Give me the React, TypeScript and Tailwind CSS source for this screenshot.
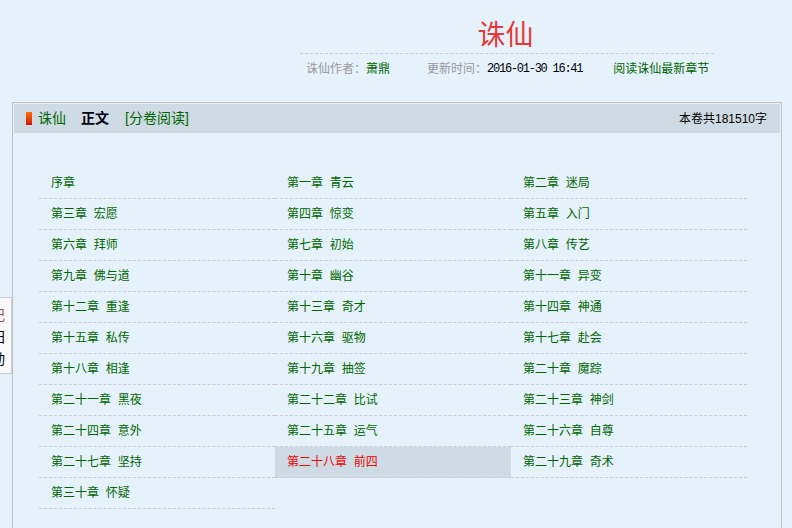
import React from 'react';

const chapters: string[] = [
  '序章', '第一章 青云', '第二章 迷局',
  '第三章 宏愿', '第四章 惊变', '第五章 入门',
  '第六章 拜师', '第七章 初始', '第八章 传艺',
  '第九章 佛与道', '第十章 幽谷', '第十一章 异变',
  '第十二章 重逢', '第十三章 奇才', '第十四章 神通',
  '第十五章 私传', '第十六章 驱物', '第十七章 赴会',
  '第十八章 相逢', '第十九章 抽签', '第二十章 魔踪',
  '第二十一章 黑夜', '第二十二章 比试', '第二十三章 神剑',
  '第二十四章 意外', '第二十五章 运气', '第二十六章 自尊',
  '第二十七章 坚持', '第二十八章 前四', '第二十九章 奇术',
  '第三十章 怀疑',
];

const current = '第二十八章 前四';

const font = { fontFamily: '"Liberation Sans", "Noto Sans CJK SC", sans-serif' };

const App: React.FC = () => {
  return (
    <div className="relative min-h-[528px] bg-[#e6f2fb] overflow-hidden text-[12px]" style={font}>
      {/* book title + info */}
      <div className="ml-[300px] w-[414px] pt-[19px]">
        <h1 className="text-center text-[28px] leading-[33px] text-[#e43a3a] font-normal pr-[3px]">诛仙</h1>
        <div className="border-t border-dashed border-[#cccccc] mt-px h-[30px] flex items-center pl-[6px] whitespace-nowrap">
          <span className="shrink-0 text-[#999999]">诛仙作者：</span>
          <span className="shrink-0 text-[#006600]">萧鼎</span>
          <span className="shrink-0 text-[#999999] ml-[37px]">更新时间：</span>
          <span className="shrink-0 text-black tracking-[-1.25px]" style={{ fontFamily: '"Liberation Mono", monospace' }}>2016-01-30 16:41</span>
          <span className="shrink-0 text-[#006600] ml-[31px]">阅读诛仙最新章节</span>
        </div>
      </div>

      {/* chapter list box */}
      <div className="mt-[19px] ml-[12px] w-[770px] border border-[#c0c0c0] p-px pb-[30px] min-h-[440px]">
        <div className="h-[29px] bg-[#cfdbe4] flex items-center pl-[12px] pr-[13px] text-[14px]">
          <span className="w-[6px] h-[13px] bg-gradient-to-b from-[#ff6a00] to-[#cc1100] mr-[6px]" />
          <span className="text-[#006600]">诛仙</span>
          <span className="ml-[15px] font-bold text-[#000011]">正文</span>
          <span className="ml-[16px] text-[#006600]">[分卷阅读]</span>
          <span className="ml-auto text-[12px] text-black">本卷共181510字</span>
        </div>

        <div className="mt-[35px] ml-[25px] w-[708px] grid grid-cols-3">
          {chapters.map((c) => (
            <div
              key={c}
              className={`h-[31px] border-b border-dashed border-[#cccccc] flex items-center pl-[12px] ${
                c === current ? 'bg-[#cfdbe4] text-[#ee0000]' : 'text-[#006600]'
              }`}
            >
              {c.replace(' ', '\u00a0\u00a0')}
            </div>
          ))}
        </div>
      </div>

      {/* floating side tab, clipped at the left edge */}
      <div className="absolute left-[-28px] top-[297px] w-[40px] h-[77px] bg-[#f9f9f9] border border-[#cccccc] flex flex-col items-end pr-[6px] pt-[6px] text-[14px] leading-[22px] text-black">
        <span className="text-[#885566]">记</span>
        <span>阳</span>
        <span>动</span>
      </div>
    </div>
  );
};

export default App;
